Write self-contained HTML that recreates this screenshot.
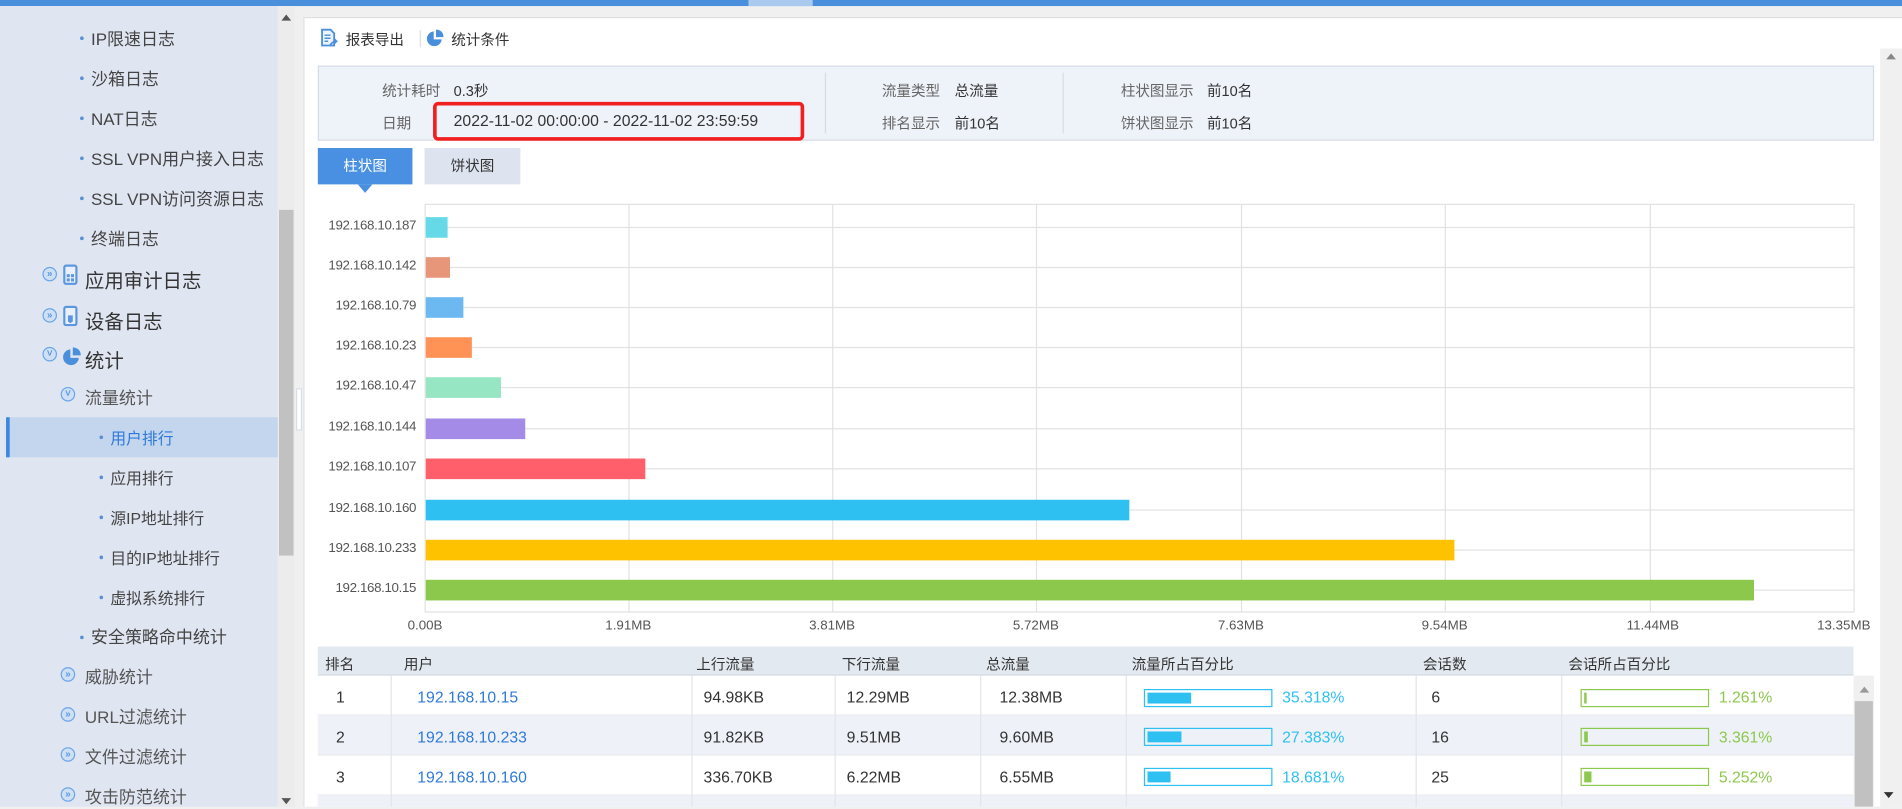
<!DOCTYPE html>
<html><head><meta charset="utf-8"><style>
*{margin:0;padding:0;box-sizing:border-box}
html,body{width:1902px;height:807px;overflow:hidden;background:#f0f0f0}
#s{position:absolute;left:0;top:0;width:1568px;height:665px;transform:scale(1.21301);transform-origin:0 0;font-family:"Liberation Sans","Noto Sans CJK SC",sans-serif;color:#333;font-size:12px}
.a{position:absolute;white-space:nowrap}
.side{position:absolute;left:0;top:5px;width:229px;height:660px;background:#dfe5f1}
.l3{font-size:14px;color:#444}
.l1{font-size:16px;color:#333}
.l2{font-size:14px;color:#555}
.dot{position:absolute;width:3px;height:3px;background:#5a8fd6;border-radius:50%}
.circ{position:absolute;width:12px;height:12px;border:1.5px solid #6aa5e8;border-radius:50%;background:#cfe0f5;color:#5a97e0;font-size:8px;line-height:9px;text-align:center;font-weight:bold}
.lbl{color:#666}
.bar{position:absolute;height:17px;left:351px}
.vg{position:absolute;top:168px;height:337px;width:1px;background:#e2e2e2}
.hg{position:absolute;left:350px;width:1178px;height:1px;background:#e2e2e2}
.ip{position:absolute;left:262px;width:81px;text-align:right;font-size:11px;color:#555;letter-spacing:-0.3px}
.ax{position:absolute;top:510px;font-size:11px;color:#555}
.th{position:absolute;top:539px;font-size:12px;color:#333}
.row{position:absolute;left:262px;width:1266px;height:33px;border-bottom:1px solid #e6e9ee}
.cs{position:absolute;top:557px;height:108px;width:1px;background:#e2e5ea}
.td{position:absolute;font-size:13px;color:#333}
.pb{position:absolute;width:106px;height:15px;border:1px solid}
.pb i{position:absolute;left:2px;top:2px;bottom:2px}
</style></head><body><div id="s">
<div class="a" style="left:0;top:0;width:1568px;height:5px;background:#4a8fdc"></div>
<div class="a" style="left:617px;top:0;width:53px;height:5px;background:#a9c9ee"></div>
<div class="side"></div>
<div class="a" style="left:229px;top:5px;width:14px;height:660px;background:#ececec"></div>
<div class="a" style="left:230px;top:173px;width:12px;height:285px;background:#c1c1c1"></div>
<div class="a" style="left:232px;top:12px;width:0;height:0;border-left:4px solid transparent;border-right:4px solid transparent;border-bottom:5px solid #555"></div>
<div class="a" style="left:232px;top:658px;width:0;height:0;border-left:4px solid transparent;border-right:4px solid transparent;border-top:5px solid #555"></div>
<div class="a" style="left:244px;top:320px;width:5px;height:35px;background:#fff;border:1px solid #d8dde6"></div>

<div class="dot" style="left:66px;top:30px"></div><div class="a l3" style="left:75px;top:22px">IP限速日志</div>
<div class="dot" style="left:66px;top:63px"></div><div class="a l3" style="left:75px;top:55px">沙箱日志</div>
<div class="dot" style="left:66px;top:96px"></div><div class="a l3" style="left:75px;top:88px">NAT日志</div>
<div class="dot" style="left:66px;top:129px"></div><div class="a l3" style="left:75px;top:121px">SSL VPN用户接入日志</div>
<div class="dot" style="left:66px;top:162px"></div><div class="a l3" style="left:75px;top:154px">SSL VPN访问资源日志</div>
<div class="dot" style="left:66px;top:195px"></div><div class="a l3" style="left:75px;top:187px">终端日志</div>
<div class="circ" style="left:35px;top:220px">»</div>
<svg class="a" style="left:52px;top:218px" width="12" height="17" viewBox="0 0 12 17"><rect x="1" y="1" width="10" height="15" rx="1.5" fill="#e9f0fa" stroke="#5a97e0" stroke-width="1.8"/><rect x="3" y="8" width="2.5" height="2.5" fill="#5a97e0"/><rect x="6.5" y="8" width="2.5" height="2.5" fill="#5a97e0"/><rect x="3" y="11.5" width="2.5" height="2.5" fill="#5a97e0"/><rect x="6.5" y="11.5" width="2.5" height="2.5" fill="#5a97e0"/></svg>
<div class="a l1" style="left:70px;top:218px">应用审计日志</div>
<div class="circ" style="left:35px;top:254px">»</div>
<svg class="a" style="left:52px;top:252px" width="12" height="17" viewBox="0 0 12 17"><rect x="1" y="1" width="10" height="15" rx="1.5" fill="#e9f0fa" stroke="#5a97e0" stroke-width="1.8"/><path d="M4 8h4v5l-2 1.5-2-1.5z" fill="#5a97e0"/></svg>
<div class="a l1" style="left:70px;top:252px">设备日志</div>
<div class="circ" style="left:35px;top:286px">˅</div>
<svg class="a" style="left:51px;top:286px" width="16" height="16" viewBox="0 0 16 16"><path d="M7 2A6.5 6.5 0 1 0 14 9H7z" fill="#4a8fdc"/><path d="M9 0.5A6 6 0 0 1 15.5 7H9z" fill="#4a8fdc"/></svg>
<div class="a l1" style="left:70px;top:284px">统计</div>
<div class="circ" style="left:50px;top:319px">˅</div><div class="a l2" style="left:70px;top:318px">流量统计</div>
<div class="a" style="left:5px;top:344px;width:224px;height:33px;background:#c3d6ee;border-left:3px solid #3a86e0"></div>
<div class="dot" style="left:82px;top:359px"></div><div class="a" style="left:91px;top:351px;font-size:13px;color:#2f7ad8">用户排行</div>
<div class="dot" style="left:82px;top:392px"></div><div class="a" style="left:91px;top:384px;font-size:13px;color:#444">应用排行</div>
<div class="dot" style="left:82px;top:425px"></div><div class="a" style="left:91px;top:417px;font-size:13px;color:#444">源IP地址排行</div>
<div class="dot" style="left:82px;top:458px"></div><div class="a" style="left:91px;top:450px;font-size:13px;color:#444">目的IP地址排行</div>
<div class="dot" style="left:82px;top:491px"></div><div class="a" style="left:91px;top:483px;font-size:13px;color:#444">虚拟系统排行</div>
<div class="dot" style="left:66px;top:524px"></div><div class="a l3" style="left:75px;top:515px">安全策略命中统计</div>
<div class="circ" style="left:50px;top:550px">»</div><div class="a l2" style="left:70px;top:548px">威胁统计</div>
<div class="circ" style="left:50px;top:583px">»</div><div class="a l2" style="left:70px;top:581px">URL过滤统计</div>
<div class="circ" style="left:50px;top:616px">»</div><div class="a l2" style="left:70px;top:614px">文件过滤统计</div>
<div class="circ" style="left:50px;top:649px">»</div><div class="a l2" style="left:70px;top:647px">攻击防范统计</div>

<div class="a" style="left:250px;top:14px;width:1318px;height:651px;background:#fff;border-left:1px solid #e0e0e0;border-top:1px solid #e0e0e0"></div>
<div class="a" style="left:1550px;top:40px;width:18px;height:625px;background:#f0f0f0"></div>
<div class="a" style="left:1555px;top:44px;border-left:4px solid transparent;border-right:4px solid transparent;border-bottom:5px solid #888"></div>
<div class="a" style="left:1553px;top:653px;border-left:4px solid transparent;border-right:4px solid transparent;border-top:5px solid #333"></div>

<svg class="a" style="left:264px;top:23px" width="15" height="17" viewBox="0 0 15 17"><path d="M1.5 1.5h7l3 3v10h-10z" fill="#eef4fc" stroke="#4a8fdc" stroke-width="1.5"/><path d="M3.5 6h5M3.5 8.5h5M3.5 11h3" stroke="#4a8fdc" stroke-width="1.2"/><path d="M8 15c1-3 3-4 5.5-4M11.5 9l2 2-2 2" stroke="#4a8fdc" stroke-width="1.4" fill="none"/></svg>
<div class="a" style="left:285px;top:24px;font-size:12px">报表导出</div>
<div class="a" style="left:346px;top:25px;width:1px;height:14px;background:#ddd"></div>
<svg class="a" style="left:351px;top:24px" width="15" height="15" viewBox="0 0 16 16"><path d="M7 2A6.5 6.5 0 1 0 14 9H7z" fill="#4a8fdc"/><path d="M9 0.5A6 6 0 0 1 15.5 7H9z" fill="#4a8fdc"/></svg>
<div class="a" style="left:372px;top:24px;font-size:12px">统计条件</div>

<div class="a" style="left:262px;top:54px;width:1283px;height:62px;background:#eef2f9;border:1px solid #d5dce8"></div>
<div class="a" style="left:680px;top:60px;width:1px;height:50px;background:#d5dce8"></div>
<div class="a" style="left:876px;top:60px;width:1px;height:50px;background:#d5dce8"></div>
<div class="a lbl" style="left:315px;top:66px">统计耗时</div><div class="a" style="left:374px;top:66px">0.3秒</div>
<div class="a lbl" style="left:315px;top:93px">日期</div><div class="a" style="left:374px;top:92px;font-size:13px">2022-11-02 00:00:00 - 2022-11-02 23:59:59</div>
<div class="a" style="left:357px;top:84px;width:306px;height:32px;border:3px solid #f02020;border-radius:4px"></div>
<div class="a lbl" style="left:727px;top:66px">流量类型</div><div class="a" style="left:787px;top:66px">总流量</div>
<div class="a lbl" style="left:727px;top:93px">排名显示</div><div class="a" style="left:787px;top:93px">前10名</div>
<div class="a lbl" style="left:924px;top:66px">柱状图显示</div><div class="a" style="left:995px;top:66px">前10名</div>
<div class="a lbl" style="left:924px;top:93px">饼状图显示</div><div class="a" style="left:995px;top:93px">前10名</div>

<div class="a" style="left:262px;top:122px;width:78px;height:30px;background:#4a90e2;color:#fff;text-align:center;line-height:30px">柱状图</div>
<div class="a" style="left:295px;top:152px;border-left:6px solid transparent;border-right:6px solid transparent;border-top:7px solid #4a90e2"></div>
<div class="a" style="left:350px;top:122px;width:79px;height:30px;background:#dde4ef;text-align:center;line-height:30px">饼状图</div>

<div class="a" style="left:350px;top:168px;width:1179px;height:337px;border:1px solid #e2e2e2"></div>
<div class="vg" style="left:518px"></div><div class="vg" style="left:686px"></div><div class="vg" style="left:854px"></div><div class="vg" style="left:1023px"></div><div class="vg" style="left:1191px"></div><div class="vg" style="left:1360px"></div>
<div class="hg" style="top:187px"></div><div class="hg" style="top:220px"></div><div class="hg" style="top:253px"></div><div class="hg" style="top:286px"></div><div class="hg" style="top:319px"></div><div class="hg" style="top:353px"></div><div class="hg" style="top:386px"></div><div class="hg" style="top:420px"></div><div class="hg" style="top:453px"></div><div class="hg" style="top:486px"></div>
<div class="bar" style="top:179px;width:18px;background:#66d9e8"></div>
<div class="bar" style="top:212px;width:20px;background:#e8967a"></div>
<div class="bar" style="top:245px;width:31px;background:#6cb8f0"></div>
<div class="bar" style="top:278px;width:38px;background:#ff9254"></div>
<div class="bar" style="top:311px;width:62px;background:#96e6c4"></div>
<div class="bar" style="top:345px;width:82px;background:#a48be8"></div>
<div class="bar" style="top:378px;width:181px;background:#ff5f6a"></div>
<div class="bar" style="top:412px;width:580px;background:#2ec0f0"></div>
<div class="bar" style="top:445px;width:848px;background:#ffc200"></div>
<div class="bar" style="top:478px;width:1095px;background:#8cc84b"></div>
<div class="ip" style="top:180px">192.168.10.187</div>
<div class="ip" style="top:213px">192.168.10.142</div>
<div class="ip" style="top:246px">192.168.10.79</div>
<div class="ip" style="top:279px">192.168.10.23</div>
<div class="ip" style="top:312px">192.168.10.47</div>
<div class="ip" style="top:346px">192.168.10.144</div>
<div class="ip" style="top:379px">192.168.10.107</div>
<div class="ip" style="top:413px">192.168.10.160</div>
<div class="ip" style="top:446px">192.168.10.233</div>
<div class="ip" style="top:479px">192.168.10.15</div>
<div class="ax" style="left:336px">0.00B</div><div class="ax" style="left:499px">1.91MB</div><div class="ax" style="left:667px">3.81MB</div><div class="ax" style="left:835px">5.72MB</div><div class="ax" style="left:1004px">7.63MB</div><div class="ax" style="left:1172px">9.54MB</div><div class="ax" style="left:1341px">11.44MB</div><div class="ax" style="left:1498px">13.35MB</div>

<div class="a" style="left:262px;top:533px;width:1266px;height:24px;background:#e3e9f0;border-bottom:1px solid #d0d7e0"></div>
<div class="th" style="left:268px">排名</div><div class="th" style="left:333px">用户</div><div class="th" style="left:574px">上行流量</div><div class="th" style="left:694px">下行流量</div><div class="th" style="left:813px">总流量</div><div class="th" style="left:933px">流量所占百分比</div><div class="th" style="left:1173px">会话数</div><div class="th" style="left:1293px">会话所占百分比</div>
<div class="row" style="top:557px;background:#fff"></div>
<div class="row" style="top:590px;background:#eef2f8"></div>
<div class="row" style="top:623px;background:#fff"></div>
<div class="a" style="left:262px;top:656px;width:1266px;height:9px;background:#eef2f8"></div>
<div class="cs" style="left:322px"></div><div class="cs" style="left:570px"></div><div class="cs" style="left:688px"></div><div class="cs" style="left:808px"></div><div class="cs" style="left:928px"></div><div class="cs" style="left:1167px"></div><div class="cs" style="left:1287px"></div>
<div class="a" style="left:1528px;top:557px;width:17px;height:108px;background:#f0f0f0"></div>
<div class="a" style="left:1529px;top:578px;width:15px;height:87px;background:#c1c1c1"></div>
<div class="a" style="left:1533px;top:566px;border-left:4px solid transparent;border-right:4px solid transparent;border-bottom:5px solid #999"></div>

<div class="td" style="left:277px;top:567px">1</div><div class="td" style="left:344px;top:567px;color:#2f7ad8">192.168.10.15</div><div class="td" style="left:580px;top:567px">94.98KB</div><div class="td" style="left:698px;top:567px">12.29MB</div><div class="td" style="left:824px;top:567px">12.38MB</div>
<div class="pb" style="left:943px;top:568px;border-color:#2ec0f0"><i style="width:36px;background:#2ec0f0"></i></div><div class="td" style="left:1057px;top:567px;color:#2ec0f0">35.318%</div>
<div class="td" style="left:1180px;top:567px">6</div>
<div class="pb" style="left:1303px;top:568px;border-color:#8cc84b"><i style="width:2px;background:#8cc84b"></i></div><div class="td" style="left:1417px;top:567px;color:#8cc84b">1.261%</div>

<div class="td" style="left:277px;top:600px">2</div><div class="td" style="left:344px;top:600px;color:#2f7ad8">192.168.10.233</div><div class="td" style="left:580px;top:600px">91.82KB</div><div class="td" style="left:698px;top:600px">9.51MB</div><div class="td" style="left:824px;top:600px">9.60MB</div>
<div class="pb" style="left:943px;top:600px;border-color:#2ec0f0"><i style="width:28px;background:#2ec0f0"></i></div><div class="td" style="left:1057px;top:600px;color:#2ec0f0">27.383%</div>
<div class="td" style="left:1180px;top:600px">16</div>
<div class="pb" style="left:1303px;top:600px;border-color:#8cc84b"><i style="width:3px;background:#8cc84b"></i></div><div class="td" style="left:1417px;top:600px;color:#8cc84b">3.361%</div>

<div class="td" style="left:277px;top:633px">3</div><div class="td" style="left:344px;top:633px;color:#2f7ad8">192.168.10.160</div><div class="td" style="left:580px;top:633px">336.70KB</div><div class="td" style="left:698px;top:633px">6.22MB</div><div class="td" style="left:824px;top:633px">6.55MB</div>
<div class="pb" style="left:943px;top:633px;border-color:#2ec0f0"><i style="width:19px;background:#2ec0f0"></i></div><div class="td" style="left:1057px;top:633px;color:#2ec0f0">18.681%</div>
<div class="td" style="left:1180px;top:633px">25</div>
<div class="pb" style="left:1303px;top:633px;border-color:#8cc84b"><i style="width:6px;background:#8cc84b"></i></div><div class="td" style="left:1417px;top:633px;color:#8cc84b">5.252%</div>
</div></body></html>
